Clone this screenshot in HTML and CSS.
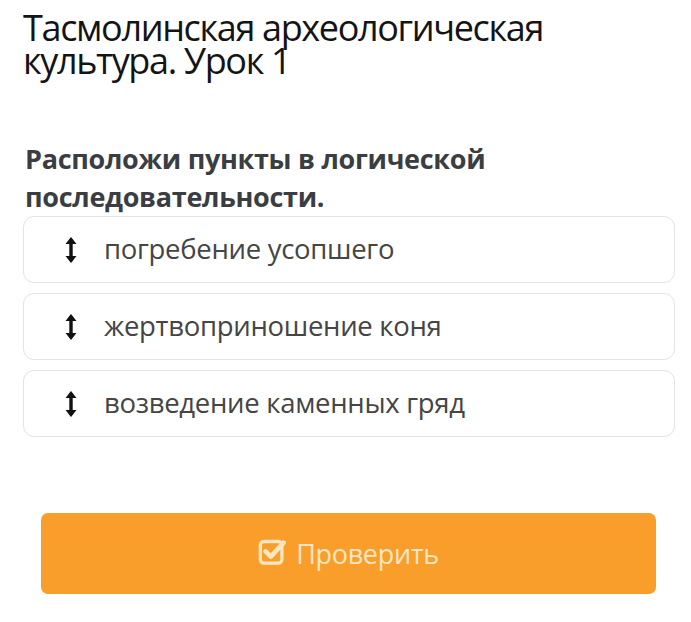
FILE: index.html
```html
<!DOCTYPE html>
<html lang="ru">
<head>
<meta charset="utf-8">
<link rel="stylesheet" href="styles.css">
</head>
<body>
<div class="page">
  <h1 class="title">Тасмолинская археологическая культура. Урок 1</h1>
  <h2 class="task">Расположи пункты в логической последовательности.</h2>
  <ul class="list">
    <li class="item"><span class="handle"><svg width="12" height="30" viewBox="0 0 12 30"><path d="M6 4 L6 26" stroke="#111" stroke-width="3.4"/><path d="M0.5 9 L6 2 L11.5 9 Z" fill="#111"/><path d="M0.5 21 L6 28 L11.5 21 Z" fill="#111"/></svg></span><span class="label">погребение усопшего</span></li>
    <li class="item"><span class="handle"><svg width="12" height="30" viewBox="0 0 12 30"><path d="M6 4 L6 26" stroke="#111" stroke-width="3.4"/><path d="M0.5 9 L6 2 L11.5 9 Z" fill="#111"/><path d="M0.5 21 L6 28 L11.5 21 Z" fill="#111"/></svg></span><span class="label">жертвоприношение коня</span></li>
    <li class="item"><span class="handle"><svg width="12" height="30" viewBox="0 0 12 30"><path d="M6 4 L6 26" stroke="#111" stroke-width="3.4"/><path d="M0.5 9 L6 2 L11.5 9 Z" fill="#111"/><path d="M0.5 21 L6 28 L11.5 21 Z" fill="#111"/></svg></span><span class="label">возведение каменных гряд</span></li>
  </ul>
  <div class="actions">
    <button class="check"><svg class="check-icon" width="28" height="28" viewBox="0 0 24 24"><rect x="2" y="3" width="18.5" height="18.5" rx="3" fill="none" stroke="#fbe6c2" stroke-width="2.8"/><path d="M6.5 11.5 L11 16 L22 4" fill="none" stroke="#fbe6c2" stroke-width="4" stroke-linecap="round" stroke-linejoin="round"/></svg><span>Проверить</span></button>
  </div>
</div>
</body>
</html>
```

FILE: styles.css
```css
html, body {
  margin: 0;
  padding: 0;
  background: #ffffff;
}
body {
  font-family: "Open Sans", "Noto Sans", sans-serif;
}
.page {
  padding: 11px 16px 0 23px;
}
.title {
  margin: 0;
  font-weight: 400;
  font-size: 36px;
  line-height: 33px;
  color: #141414;
  letter-spacing: -1.35px;
}
.task {
  margin: 63px 0 0 2px;
  font-weight: 700;
  font-size: 27px;
  line-height: 38px;
  color: #3a3e43;
  letter-spacing: -0.3px;
}
.list {
  list-style: none;
  margin: 0;
  padding: 0;
  display: flex;
  flex-direction: column;
  gap: 10px;
}
.item {
  border: 1px solid #e3e3e3;
  border-radius: 11px;
  display: flex;
  align-items: center;
  padding-left: 40px;
  box-sizing: border-box;
  height: 67px;
}
.handle {
  width: 14px;
  display: flex;
  align-items: center;
  justify-content: center;
  margin-right: 26px;
}
.label {
  font-size: 27.5px;
  color: #454545;
  letter-spacing: -0.3px;
  margin-top: -2px;
}
.actions {
  margin-top: 76px;
  padding: 0 19px 0 18px;
}
.check {
  width: 100%;
  height: 81px;
  border: none;
  border-radius: 7px;
  background: #f99d2b;
  display: flex;
  align-items: center;
  justify-content: center;
  gap: 10px;
  font-family: "Open Sans", "Noto Sans", sans-serif;
  font-size: 27px;
  color: #fbe6c2;
  letter-spacing: -0.3px;
  padding: 0;
}
.check-icon {
  margin-top: -4px;
}
```
